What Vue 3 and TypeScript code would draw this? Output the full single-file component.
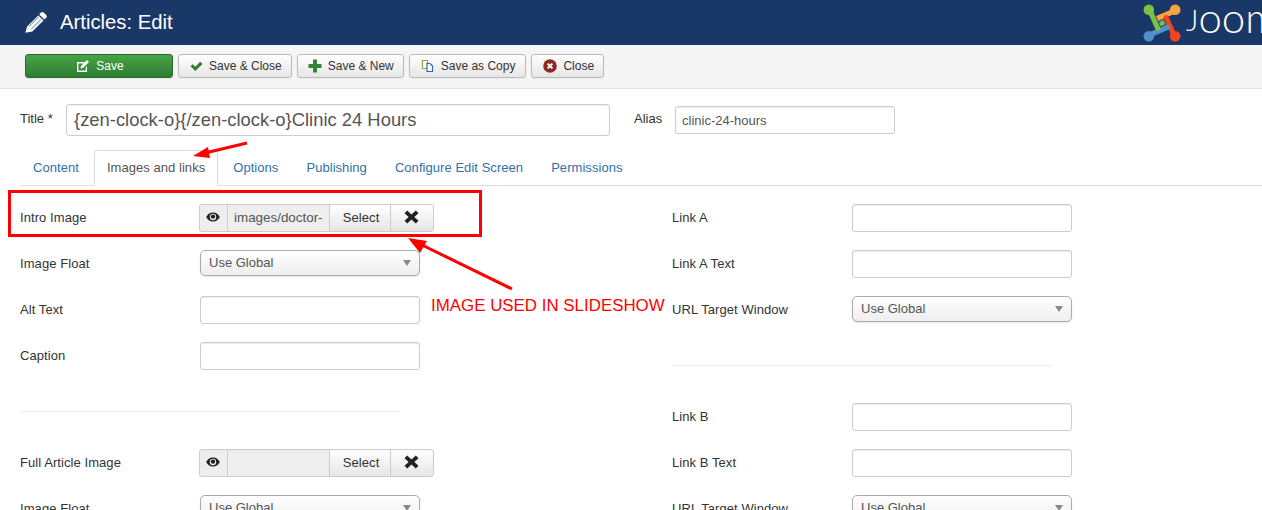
<script setup lang="ts">
interface Field {
  label: string
  type: 'text' | 'select' | 'media'
  value?: string
}

const toolbar = [
  { label: 'Save & Close', icon: 'check', cls: '' },
  { label: 'Save & New', icon: 'plus', cls: 'btn-new' },
  { label: 'Save as Copy', icon: 'copy', cls: 'btn-copy' },
  { label: 'Close', icon: 'cancel', cls: '' }
]

const tabs = ['Content', 'Images and links', 'Options', 'Publishing', 'Configure Edit Screen', 'Permissions']

const leftTop: Field[] = [
  { label: 'Intro Image', type: 'media', value: 'images/doctor-' },
  { label: 'Image Float', type: 'select' },
  { label: 'Alt Text', type: 'text' },
  { label: 'Caption', type: 'text' }
]
const leftBottom: Field[] = [
  { label: 'Full Article Image', type: 'media', value: '' },
  { label: 'Image Float', type: 'select' }
]
const rightTop: Field[] = [
  { label: 'Link A', type: 'text' },
  { label: 'Link A Text', type: 'text' },
  { label: 'URL Target Window', type: 'select' }
]
const rightBottom: Field[] = [
  { label: 'Link B', type: 'text' },
  { label: 'Link B Text', type: 'text' },
  { label: 'URL Target Window', type: 'select' }
]

const columns = [
  { cls: 'col-left', groups: [leftTop, leftBottom] },
  { cls: 'col-right', groups: [rightTop, rightBottom] }
]

const logoArms = [
  { color: '#f9a541', angle: 0 },
  { color: '#f44321', angle: 90 },
  { color: '#5091cd', angle: 180 },
  { color: '#7ac143', angle: 270 }
]
</script>

<template>
  <div class="page">
    <header class="topbar">
      <svg class="pencil" viewBox="0 0 22 21" width="22" height="21">
        <path d="M16 .6a2 2 0 0 1 2.600 0l2.600 2.500a2 2 0 0 1 0 2.700l-1.800 1.800-5.200-5.100zM13.300 3.400l5.200 5.100L7.300 19.600 .4 20.800l1.700-6.300z" fill="#fff" />
        <path d="M3.700 14.800l9.700-9.600M6.200 17.200l9.700-9.600" stroke="#1a3867" stroke-width=".7" />
      </svg>
      <h1 class="page-title">Articles: Edit</h1>
      <div class="brand">
        <svg viewBox="0 0 36 36" width="38" height="38">
          <g v-for="arm in logoArms" :key="'leg' + arm.angle" :transform="`rotate(${arm.angle} 18 18)`">
            <path d="M13 14 L20 22" fill="none" :stroke="arm.color" stroke-width="5" stroke-linecap="round" />
          </g>
          <g v-for="arm in logoArms" :key="arm.angle" :transform="`rotate(${arm.angle} 18 18)`">
            <path d="M31 6 L13 14" fill="none" stroke="#1a3867" stroke-width="6.500" />
            <path d="M31 6 L13 14" fill="none" :stroke="arm.color" stroke-width="5" stroke-linecap="round" />
            <circle cx="30.500" cy="5.500" r="5" :fill="arm.color" />
          </g>
        </svg>
        <span class="brand-name"><span class="brand-cap">J</span>oomla!</span>
      </div>
    </header>

    <div class="toolbar">
      <button class="btn btn-save">
        <svg viewBox="0 0 14 14" width="14" height="14">
          <path d="M1 3h8L7.600 4.400H2.400v7.200h7.200V8.600L11 7.200V13H1z" fill="#fff" />
          <path d="M5 7l6-6 2 2-6 6-2.600.6z" fill="#fff" />
        </svg>
        Save
      </button>
      <button v-for="b in toolbar" :key="b.label" class="btn" :class="b.cls">
        <svg v-if="b.icon === 'check'" viewBox="0 0 14 12" width="13" height="12">
          <path d="M.5 6.400l2.400-2.400 2.800 2.800L11 1.500l2.500 2.400L5.700 11.500z" fill="#2f7d32" />
        </svg>
        <svg v-else-if="b.icon === 'plus'" viewBox="0 0 14 14" width="14" height="14">
          <path d="M5 .5h4V5h4.500v4H9v4.500H5V9H.5V5H5z" fill="#378137" />
        </svg>
        <svg v-else-if="b.icon === 'copy'" viewBox="0 0 14 14" width="14" height="14">
          <path d="M1.500 1.500h5v8h-5z" fill="#fff" stroke="#a5a23a" stroke-width="1.200" />
          <path d="M6 4.500h3l2.500 2.500v5.500H6z" fill="#fff" stroke="#2a69b8" stroke-width="1.200" />
        </svg>
        <svg v-else viewBox="0 0 14 14" width="14" height="14">
          <circle cx="7" cy="7" r="6.800" fill="#8f2a22" />
          <path d="M4.600 4.600l4.800 4.800M9.400 4.600l-4.800 4.800" stroke="#fff" stroke-width="2" />
        </svg>
        {{ b.label }}
      </button>
    </div>

    <main class="content">
      <div class="title-row">
        <label class="title-label">Title *</label>
        <input class="input title-input" value="{zen-clock-o}{/zen-clock-o}Clinic 24 Hours" />
        <label class="alias-label">Alias</label>
        <input class="input alias-input" value="clinic-24-hours" />
      </div>

      <nav class="tabs">
        <a v-for="(t, i) in tabs" :key="t" class="tab" :class="{ active: i === 1 }">{{ t }}</a>
      </nav>

      <div class="columns">
        <section v-for="col in columns" :key="col.cls" class="col" :class="col.cls">
          <template v-for="(group, g) in col.groups" :key="g">
            <hr v-if="g > 0" class="divider" />
            <div v-for="f in group" :key="f.label" class="row">
              <span class="row-label">{{ f.label }}</span>
              <input v-if="f.type === 'text'" class="input field-input" />
              <div v-else-if="f.type === 'select'" class="select">
                <span>Use Global</span>
                <i class="caret"></i>
              </div>
              <div v-else class="media">
                <span class="media-eye">
                  <svg viewBox="0 0 14 10" width="14" height="10">
                    <path d="M7 .5C3.800.5 1.400 2.600.2 5c1.200 2.400 3.600 4.500 6.800 4.500s5.600-2.100 6.800-4.500C12.600 2.600 10.200.5 7 .5zm0 1.300a3.200 3.200 0 1 1 0 6.400 3.200 3.200 0 0 1 0-6.400z" fill="#222" fill-rule="evenodd" />
                    <circle cx="7" cy="4.600" r="2.200" fill="#222" />
                  </svg>
                </span>
                <span class="media-path">{{ f.value }}</span>
                <span class="media-btn media-select">Select</span>
                <span class="media-btn media-clear">
                  <svg viewBox="0 0 15 14" width="15" height="14">
                    <path d="M.5 3.200L3.200.5 7.500 4.600 11.800.5l2.700 2.700L10.300 7l4.200 3.800-2.700 2.700-4.300-4.100-4.300 4.100L.5 10.800 4.700 7z" fill="#222" />
                  </svg>
                </span>
              </div>
            </div>
          </template>
        </section>
      </div>
    </main>

    <!-- annotations drawn over the screenshot -->
    <div class="callout-box"></div>
    <svg class="arrows" width="1262" height="510" viewBox="0 0 1262 510">
      <path d="M247 143L205 153" stroke="#f00" stroke-width="3" />
      <path d="M193 156L208 147L210 158z" fill="#f00" />
      <path d="M512 289L422 245" stroke="#f00" stroke-width="3" />
      <path d="M408 238L427 241L420 253z" fill="#f00" />
    </svg>
    <div class="callout-text">IMAGE USED IN SLIDESHOW</div>
  </div>
</template>

<style>
html, body {
  margin: 0;
  overflow: hidden;
  background: #fff;
}
</style>

<style scoped>
.page {
  position: relative;
  width: 1262px;
  height: 510px;
  overflow: hidden;
  font-family: "Liberation Sans", Arial, sans-serif;
  font-size: 13px;
  color: #333;
}

.topbar {
  height: 45px;
  background: #1a3867;
  display: flex;
  align-items: center;
  padding-left: 25px;
  box-sizing: border-box;
}

.pencil {
  margin-right: 13px;
}

.page-title {
  margin: 0;
  font-size: 20.3px;
  font-weight: 400;
  color: #fff;
}

.brand {
  margin-left: auto;
  display: flex;
  align-items: center;
  width: 119px;
  flex-shrink: 0;
  overflow: hidden;
  white-space: nowrap;
}

.brand svg {
  flex-shrink: 0;
}

.brand-name {
  margin: 0 0 10px 5px;
  font-family: Lato, sans-serif;
  font-weight: 300;
  font-size: 42px;
  line-height: 38px;
  color: #fff;
}

.brand-cap {
  font-size: 30px;
  vertical-align: 2px;
}

.toolbar {
  height: 44px;
  box-sizing: border-box;
  background: #f5f5f5;
  border-bottom: 1px solid #e3e3e3;
  padding: 9px 0 0 25px;
  display: flex;
  gap: 5px;
  align-items: flex-start;
}

.btn {
  height: 24px;
  padding: 0 9px 0 11px;
  display: flex;
  align-items: center;
  justify-content: center;
  gap: 6px;
  font: inherit;
  font-size: 12px;
  color: #333;
  background: linear-gradient(#fff, #e6e6e6);
  border: 1px solid #bbb;
  border-radius: 3px;
  box-shadow: 0 1px 2px rgba(0, 0, 0, 0.05);
}

.btn-new {
  padding: 0 9px 0 10px;
}

.btn-copy {
  padding-right: 10px;
}

.btn-save {
  width: 148px;
  color: #fff;
  background: linear-gradient(#46a546, #2f7d32);
  border-color: #2a6b2d;
}

.content {
  padding: 15px 0 0 20px;
}

.title-row {
  display: flex;
  align-items: center;
  height: 32px;
}

.title-label {
  width: 46px;
  margin-top: -4px;
}

.input {
  box-sizing: border-box;
  font-family: inherit;
  color: #555;
  background: #fff;
  border: 1px solid #ccc;
  border-radius: 3px;
  box-shadow: inset 0 1px 1px rgba(0, 0, 0, 0.075);
  outline: none;
}

.title-input {
  width: 544px;
  height: 32px;
  padding: 0 7px;
  font-size: 18.4px;
}

.alias-label {
  margin: -4px 13px 0 24px;
  width: 28px;
}

.alias-input {
  width: 220px;
  height: 28px;
  padding: 0 6px;
  font-size: 13px;
}

.tabs {
  margin-top: 14px;
  height: 36px;
  box-sizing: border-box;
  display: flex;
  gap: 2px;
  border-bottom: 1px solid #ddd;
}

.tab {
  height: 36px;
  box-sizing: border-box;
  padding: 9px 12px 0;
  border: 1px solid transparent;
  border-radius: 4px 4px 0 0;
  color: #3071a9;
  letter-spacing: 0.05px;
  white-space: nowrap;
}

.tab.active {
  color: #555;
  background: #fff;
  border-color: #ddd #ddd #fff;
}

.columns {
  display: flex;
  padding-top: 18px;
}

.col-left {
  width: 652px;
}

.divider {
  width: 380px;
  height: 1px;
  margin: 41px 0 37px;
  border: 0;
  background: #eee;
}

.row {
  display: flex;
  align-items: flex-start;
  height: 28px;
  margin-bottom: 18px;
}

.row-label {
  width: 180px;
  line-height: 27px;
  letter-spacing: 0.07px;
  flex-shrink: 0;
}

.field-input {
  width: 220px;
  height: 28px;
}

.select {
  box-sizing: border-box;
  width: 220px;
  height: 26px;
  padding: 0 8px 1px;
  display: flex;
  align-items: center;
  justify-content: space-between;
  color: #555;
  background: linear-gradient(#fff, #eee);
  border: 1px solid #aaa;
  border-radius: 5px;
  box-shadow: 0 1px 2px rgba(0, 0, 0, 0.1);
}

.caret {
  width: 0;
  height: 0;
  border-left: 4px solid transparent;
  border-right: 4px solid transparent;
  border-top: 6px solid #888;
}

.media {
  display: flex;
  height: 28px;
  margin-left: -1px;
}

.media > span {
  box-sizing: border-box;
  height: 28px;
  padding-bottom: 2px;
  display: flex;
  align-items: center;
  justify-content: center;
  border: 1px solid #ccc;
}

.media-eye {
  width: 29px;
  padding-right: 2px;
  background: #eee;
  border-radius: 3px 0 0 3px;
}

.media-path {
  width: 103px;
  margin-left: -1px;
  justify-content: flex-start !important;
  padding-left: 6px;
  font-size: 13.4px;
  color: #555;
  background: #eee;
}

.media-btn {
  background: linear-gradient(#fff, #e6e6e6);
  color: #333;
  margin-left: -1px;
  letter-spacing: 0.1px;
}

.media-select {
  width: 62px;
  padding-left: 2px;
}

.media-clear {
  width: 44px;
  padding-right: 2px;
  border-radius: 0 3px 3px 0;
}

.callout-box {
  position: absolute;
  left: 8px;
  top: 190px;
  width: 474px;
  height: 47px;
  box-sizing: border-box;
  border: 3px solid #f00;
}

.arrows {
  position: absolute;
  left: 0;
  top: 0;
  pointer-events: none;
}

.callout-text {
  position: absolute;
  left: 431px;
  top: 296px;
  font-size: 16.9px;
  line-height: 20px;
  color: #f00;
  white-space: nowrap;
}
</style>
